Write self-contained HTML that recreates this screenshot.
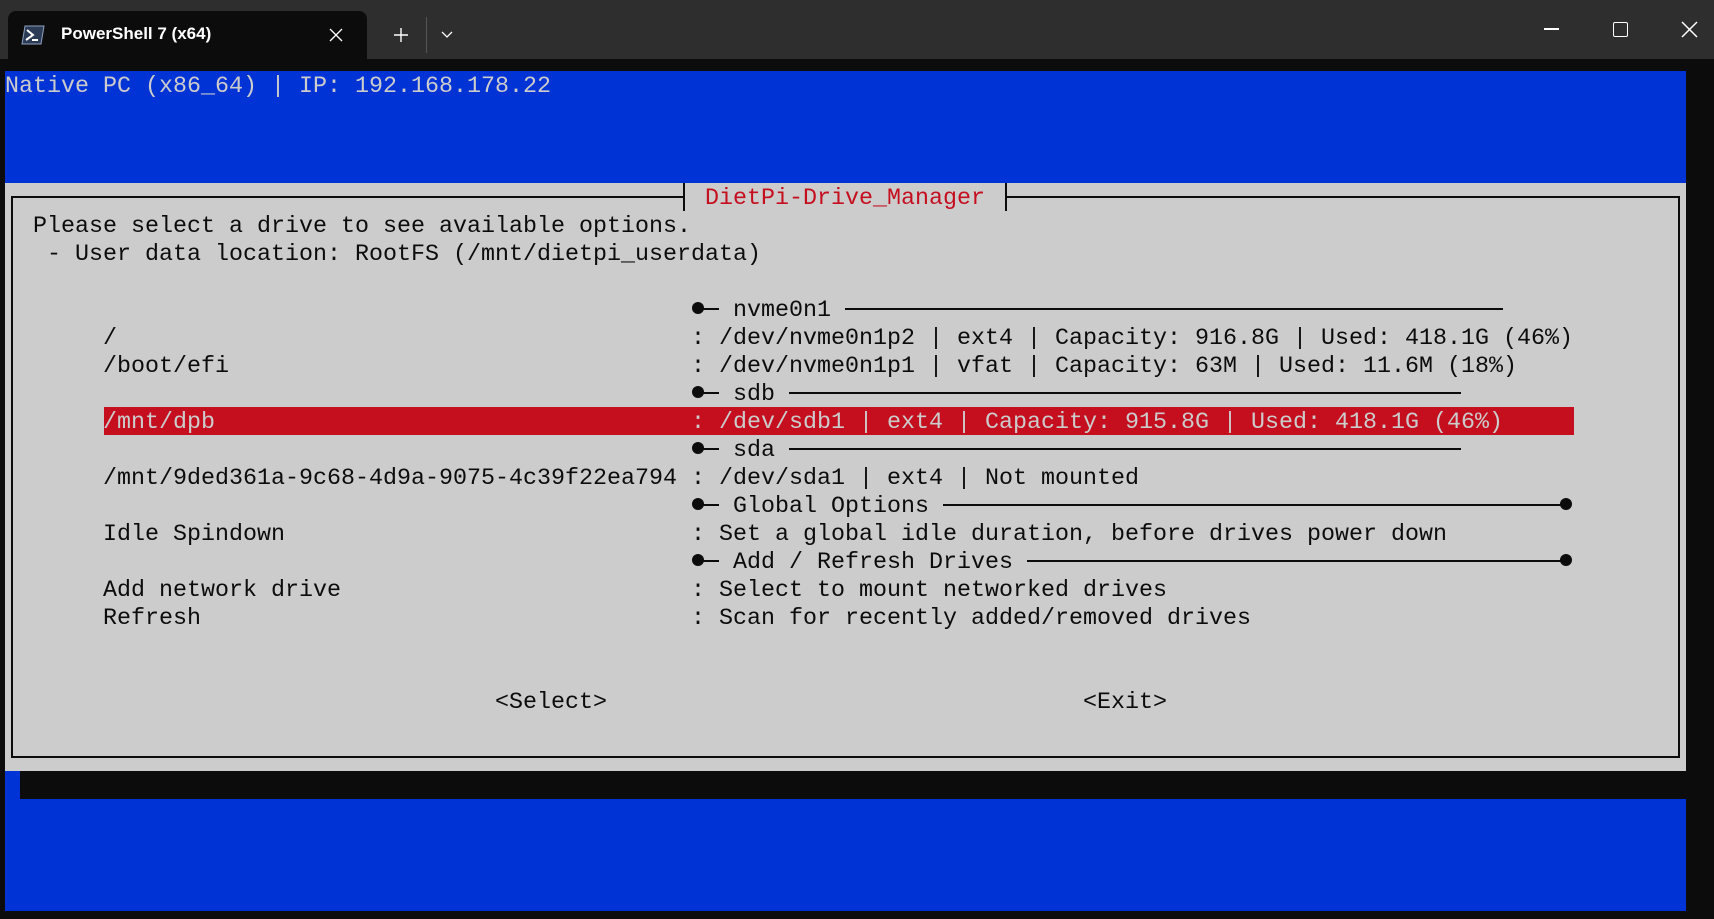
<!DOCTYPE html>
<html><head><meta charset="utf-8"><style>
*{margin:0;padding:0;box-sizing:border-box}
body{width:1714px;height:919px;background:#0c0c0c;position:relative;overflow:hidden;font-family:"Liberation Mono",monospace}
.a{position:absolute}
.t{position:absolute;font-size:23.33px;line-height:28px;height:28px;white-space:pre;color:#0c0c0c;padding-top:2px}
.h{position:absolute;height:2px;background:#0c0c0c}
.dot{position:absolute;width:12px;height:12px;border-radius:50%;background:#0c0c0c}
</style></head><body>
<div class="a" style="left:0;top:0;width:1714px;height:59px;background:#2e2e2e"></div>
<div class="a" style="left:8px;top:11px;width:359px;height:48px;background:#0c0c0c;border-radius:8px 8px 0 0"></div>
<svg class="a" style="left:21px;top:25px" width="24" height="20" viewBox="0 0 24 20"><path d="M4 1H23L20 19H1Z" fill="#2b3a55" stroke="#8fa3c0" stroke-width="1"/><path d="M6 5L12 10L5 15" stroke="#fff" stroke-width="2" fill="none"/><path d="M11 15H17" stroke="#fff" stroke-width="2"/></svg>
<div class="a" style="left:61px;top:24px;font-family:'Liberation Sans',sans-serif;font-size:17px;font-weight:bold;color:#fff">PowerShell 7 (x64)</div>
<svg class="a" style="left:329px;top:28px" width="14" height="14"><path d="M1 1L13 13M13 1L1 13" stroke="#fff" stroke-width="1.3"/></svg>
<svg class="a" style="left:393px;top:27px" width="16" height="16"><path d="M8 1V15M1 8H15" stroke="#fff" stroke-width="1.4"/></svg>
<div class="a" style="left:426px;top:17px;width:1px;height:36px;background:#555"></div>
<svg class="a" style="left:441px;top:31px" width="12" height="8"><path d="M1 1L6 6L11 1" stroke="#fff" stroke-width="1.3" fill="none"/></svg>
<div class="a" style="left:1544px;top:28px;width:15px;height:1.5px;background:#fff"></div>
<div class="a" style="left:1613px;top:22px;width:15px;height:15px;border:1.5px solid #fff;border-radius:2px"></div>
<svg class="a" style="left:1681px;top:21px" width="17" height="17"><path d="M1 1L16 16M16 1L1 16" stroke="#fff" stroke-width="1.5"/></svg>

<div class="a" style="left:5px;top:71px;width:1681px;height:840px;background:#0033d6"></div>
<div class="a" style="left:5px;top:183px;width:1681px;height:588px;background:#cccccc"></div>
<div class="a" style="left:20px;top:771px;width:1666px;height:28px;background:#0c0c0c"></div>
<div class="t" style="left:5px;top:71px;color:#cccccc">Native PC (x86_64) | IP: 192.168.178.22</div>

<div class="h" style="left:11px;top:196px;width:673px"></div>
<div class="h" style="left:1005px;top:196px;width:675px"></div>
<div class="a" style="left:683px;top:183px;width:2px;height:28px;background:#0c0c0c"></div>
<div class="a" style="left:1005px;top:183px;width:2px;height:28px;background:#0c0c0c"></div>
<div class="a" style="left:11px;top:196px;width:2px;height:562px;background:#0c0c0c"></div>
<div class="a" style="left:1678px;top:196px;width:2px;height:562px;background:#0c0c0c"></div>
<div class="h" style="left:11px;top:756px;width:1669px"></div>
<div class="t" style="left:705px;top:183px;color:#c50f1f">DietPi-Drive_Manager</div>

<div class="t" style="left:33px;top:211px">Please select a drive to see available options.</div>
<div class="t" style="left:47px;top:239px">- User data location: RootFS (/mnt/dietpi_userdata)</div>

<div class="dot" style="left:692px;top:302px"></div><div class="h" style="left:700px;top:308px;width:19px"></div>
<div class="t" style="left:733px;top:295px">nvme0n1</div><div class="h" style="left:845px;top:308px;width:658px"></div>

<div class="dot" style="left:692px;top:386px"></div><div class="h" style="left:700px;top:392px;width:19px"></div>
<div class="t" style="left:733px;top:379px">sdb</div><div class="h" style="left:789px;top:392px;width:672px"></div>

<div class="dot" style="left:692px;top:442px"></div><div class="h" style="left:700px;top:448px;width:19px"></div>
<div class="t" style="left:733px;top:435px">sda</div><div class="h" style="left:789px;top:448px;width:672px"></div>

<div class="dot" style="left:692px;top:498px"></div><div class="h" style="left:700px;top:504px;width:19px"></div>
<div class="t" style="left:733px;top:491px">Global Options</div><div class="h" style="left:943px;top:504px;width:620px"></div><div class="dot" style="left:1560px;top:498px"></div>

<div class="dot" style="left:692px;top:554px"></div><div class="h" style="left:700px;top:560px;width:19px"></div>
<div class="t" style="left:733px;top:547px">Add / Refresh Drives</div><div class="h" style="left:1027px;top:560px;width:536px"></div><div class="dot" style="left:1560px;top:554px"></div>

<div class="t" style="left:103px;top:323px">/</div><div class="t" style="left:691px;top:323px">: /dev/nvme0n1p2 | ext4 | Capacity: 916.8G | Used: 418.1G (46%)</div>
<div class="t" style="left:103px;top:351px">/boot/efi</div><div class="t" style="left:691px;top:351px">: /dev/nvme0n1p1 | vfat | Capacity: 63M | Used: 11.6M (18%)</div>
<div class="a" style="left:104px;top:407px;width:1470px;height:28px;background:#c50f1f"></div>
<div class="t" style="left:103px;top:407px;color:#cccccc">/mnt/dpb</div><div class="t" style="left:691px;top:407px;color:#cccccc">: /dev/sdb1 | ext4 | Capacity: 915.8G | Used: 418.1G (46%)</div>
<div class="t" style="left:103px;top:463px">/mnt/9ded361a-9c68-4d9a-9075-4c39f22ea794</div><div class="t" style="left:691px;top:463px">: /dev/sda1 | ext4 | Not mounted</div>
<div class="t" style="left:103px;top:519px">Idle Spindown</div><div class="t" style="left:691px;top:519px">: Set a global idle duration, before drives power down</div>
<div class="t" style="left:103px;top:575px">Add network drive</div><div class="t" style="left:691px;top:575px">: Select to mount networked drives</div>
<div class="t" style="left:103px;top:603px">Refresh</div><div class="t" style="left:691px;top:603px">: Scan for recently added/removed drives</div>

<div class="t" style="left:495px;top:687px">&lt;Select&gt;</div>
<div class="t" style="left:1083px;top:687px">&lt;Exit&gt;</div>
</body></html>
